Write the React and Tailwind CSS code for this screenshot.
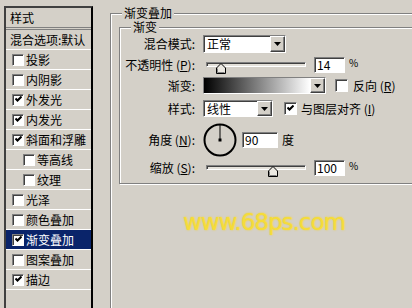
const items = [
  { t: "投影", c: false },
  { t: "内阴影", c: false },
  { t: "外发光", c: true },
  { t: "内发光", c: true },
  { t: "斜面和浮雕", c: true },
  { t: "等高线", c: false, sub: true },
  { t: "纹理", c: false, sub: true },
  { t: "光泽", c: false },
  { t: "颜色叠加", c: false },
  { t: "渐变叠加", c: true, sel: true },
  { t: "图案叠加", c: false },
  { t: "描边", c: true },
];

const sunken =
  "border border-t-[#808080] border-l-[#808080] border-r-white border-b-white shadow-[inset_1px_1px_0_#404040]";

const Check = ({ checked, size = "w-[13px] h-[13px]" }) => (
  <span className={`${size} ${sunken} bg-white flex items-center justify-center shrink-0`}>
    {checked && (
      <svg width="7" height="7" viewBox="0 0 7 7">
        <path d="M0.5 2.5 L2.5 4.5 L6.5 0.5" stroke="black" strokeWidth="2" fill="none" />
      </svg>
    )}
  </span>
);

const DropBtn = () => (
  <span className="w-[15px] h-full bg-[#d4d0c8] border border-t-white border-l-white border-r-[#404040] border-b-[#404040] shadow-[inset_-1px_-1px_0_#808080] flex items-center justify-center shrink-0">
    <svg width="7" height="4" viewBox="0 0 7 4">
      <path d="M0 0h7L3.5 4z" fill="black" />
    </svg>
  </span>
);

const Select = ({ value, w }) => (
  <div className={`${w} h-full ${sunken} bg-white flex items-stretch`}>
    <span className="flex-1 pl-[3px] flex items-center">{value}</span>
    <DropBtn />
  </div>
);

const Slider = ({ pos }) => (
  <div className="relative w-[100px] h-[16px] ml-[3px]">
    <div className={`absolute left-0 right-0 top-[5px] h-[5px] ${sunken} bg-[#e4e1da]`} />
    <svg className="absolute top-[6px]" style={{ left: pos }} width="10" height="11" viewBox="0 0 10 11">
      <path d="M5 0.5 L9.5 5 V10.5 H0.5 V5 Z" fill="#ece9e2" stroke="black" />
      <path d="M1.5 5.5 V9.5 H8.5" stroke="#808080" fill="none" />
    </svg>
  </div>
);

const Input = ({ value, w = "w-[31px]" }) => (
  <div className={`${w} h-[16px] ${sunken} bg-white pl-[2px] flex items-center`}>{value}</div>
);

const Key = ({ k }) => (
  <span>
    {" "}(<u>{k}</u>)
  </span>
);

const Row = ({ label, h, mt, children }) => (
  <div className={`flex items-center ${h} ${mt}`}>
    <div className="w-[75px] text-right whitespace-nowrap">{label}</div>
    <div className="ml-[8px] flex items-center h-full">{children}</div>
  </div>
);

export default function App() {
  return (
    <div className="w-[412px] h-[308px] bg-[#d4d0c8] overflow-hidden relative flex items-start text-[12px] leading-[14px] text-black [font-family:'Noto_Sans_CJK_SC',sans-serif]">
      {/* styles list */}
      <div className="mt-[6px] ml-[4px] w-[89px] h-[310px] border-2 border-[#404040] border-r-black shrink-0">
        <div className="h-[22px] pl-[4px] flex items-center border-b-[3px] border-double border-[#808080]">样式</div>
        <div className="h-[20px] pl-[4px] flex items-center border-b border-white whitespace-nowrap">混合选项:默认</div>
        {items.map((it) => (
          <div
            key={it.t}
            className={`h-[20px] flex items-center gap-[2px] border-b border-white whitespace-nowrap ${
              it.sub ? "pl-[17px]" : "pl-[6px]"
            } ${it.sel ? "bg-[#0a246a] text-white" : ""}`}
          >
            <Check checked={it.c} size="w-[12px] h-[12px]" />
            <span>{it.t}</span>
          </div>
        ))}
      </div>

      {/* gradient overlay panel */}
      <fieldset className="ml-[17px] mt-[7px] w-[330px] h-[320px] shrink-0 border border-[#808080] shadow-[inset_1px_1px_0_white,1px_1px_0_white]">
        <legend className="ml-[11px] px-[2px] bg-[#d4d0c8] leading-[12px]">渐变叠加</legend>
        <fieldset className="ml-[8px] mt-[2px] w-[320px] border border-[#808080] shadow-[inset_1px_1px_0_white,1px_1px_0_white] pb-[7px]">
          <legend className="ml-[11px] px-[2px] bg-[#d4d0c8] leading-[12px]">渐变</legend>
          <Row label="混合模式:" h="h-[18px]" mt="mt-[2px]">
            <Select value="正常" w="w-[83px]" />
          </Row>
          <Row label={<>不透明性<Key k="P" />:</>} h="h-[16px]" mt="mt-[4px]">
            <Slider pos={10} />
            <div className="ml-[8px]"><Input value="14" /></div>
            <span className="ml-[4px] self-start text-[10px] leading-[12px]">%</span>
          </Row>
          <Row label="渐变:" h="h-[17px]" mt="mt-[4px]">
            <div className={`w-[123px] h-full ${sunken} flex items-stretch`}>
              <div className="flex-1 bg-[linear-gradient(to_right,#000,#fff)]" />
              <DropBtn />
            </div>
            <span className="ml-[9px]"><Check /></span>
            <span className="ml-[5px]">反向<Key k="R" /></span>
          </Row>
          <Row label="样式:" h="h-[17px]" mt="mt-[6px]">
            <Select value="线性" w="w-[70px]" />
            <span className="ml-[11px]"><Check checked /></span>
            <span className="ml-[4px]">与图层对齐<Key k="I" /></span>
          </Row>
          <Row label={<>角度<Key k="N" />:</>} h="h-[34px]" mt="mt-[6px]">
            <svg width="34" height="34" viewBox="0 0 34 34">
              <circle cx="17" cy="17" r="15.5" stroke="black" strokeWidth="2" fill="none" />
              <line x1="17" y1="2" x2="17" y2="17" stroke="black" strokeWidth="1" />
              <rect x="15.5" y="15.5" width="3" height="3" fill="black" />
            </svg>
            <div className="ml-[5px]"><Input value="90" w="w-[36px]" /></div>
            <span className="ml-[4px]">度</span>
          </Row>
          <Row label={<>缩放<Key k="S" />:</>} h="h-[16px]" mt="mt-[3px]">
            <Slider pos={62} />
            <div className="ml-[8px]"><Input value="100" /></div>
            <span className="ml-[4px] self-start text-[10px] leading-[12px]">%</span>
          </Row>
        </fieldset>
      </fieldset>

      <div className="absolute left-[183px] top-[210px] text-[23px] leading-[24px] text-[#f5dc3a] [font-family:'DejaVu_Sans',sans-serif] [text-shadow:0_0_2px_#f3d423] tracking-[-1px]">
        www.68ps.com
      </div>
    </div>
  );
}
